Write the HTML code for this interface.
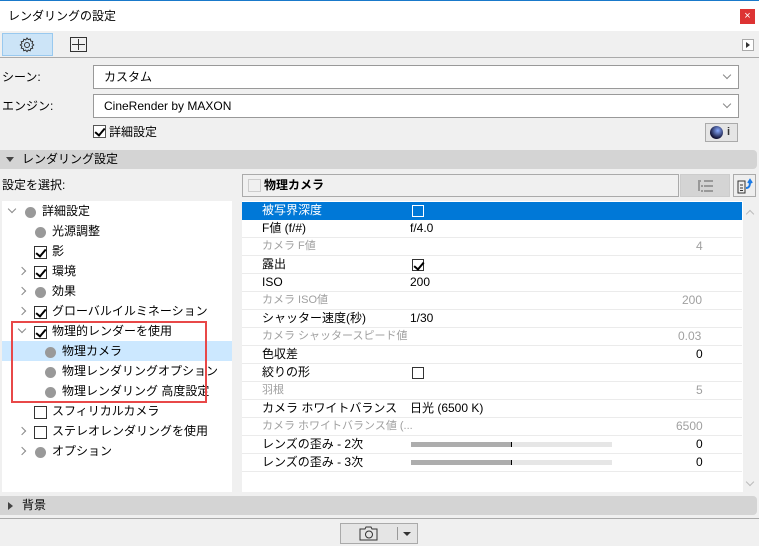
<!DOCTYPE html>
<html><head><meta charset="utf-8"><style>
*{box-sizing:border-box;margin:0;padding:0}
body{width:759px;height:546px;background:#f0f0f0;font-family:"Liberation Sans","Noto Sans CJK JP",sans-serif;font-size:12px;line-height:16px;color:#000;position:relative;overflow:hidden}
.a{position:absolute}
.cb{position:absolute;width:13px;height:13px;border:1px solid #333;background:#fff}
.cb.k::after{content:"";position:absolute;left:3px;top:0px;width:4px;height:8px;border:solid #000;border-width:0 2px 2px 0;transform:rotate(40deg)}
.dot{position:absolute;width:11px;height:11px;border-radius:50%;background:#999}
.chev{position:absolute;width:6px;height:6px;border:solid #888;border-width:0 1.5px 1.5px 0}
.row{position:absolute;left:0;width:500px;height:18px;border-bottom:1px solid #ebebeb}
.row span{position:absolute;top:0;line-height:17px;height:17px}
.g{color:#a0a0a0}
</style></head><body>
<div class="a" style="left:0;top:0;width:759px;height:1px;background:#1979ca"></div>
<div class="a" style="left:0;top:1px;width:759px;height:30px;background:#fff"></div>
<div class="a" style="left:8px;top:8px;font-size:12px">レンダリングの設定</div>
<div class="a" style="left:740px;top:9px;width:15px;height:15px;background:#d33;color:#fff;font-size:11px;text-align:center;line-height:14px">×</div>
<div class="a" style="left:2px;top:33px;width:51px;height:23px;background:#cce4f7;border:1px solid #99c9ef"></div>
<svg class="a" style="left:18px;top:36px" width="18" height="18" viewBox="0 0 18 18"><circle cx="9" cy="9" r="2.5" fill="none" stroke="#333"/><path d="M9 2l1.3 1.6 2-.6.4 2 2 .5-.6 2L15.7 9l-1.6 1.3.6 2-2 .4-.5 2-2-.6L9 15.7l-1.3-1.6-2 .6-.4-2-2-.5.6-2L2.3 9l1.6-1.3-.6-2 2-.4.5-2 2 .6z" fill="none" stroke="#333"/></svg>
<svg class="a" style="left:70px;top:37px" width="17" height="15"><rect x=".5" y=".5" width="16" height="14" fill="none" stroke="#333"/><path d="M8.5 2v11M2 7.5h13" stroke="#333"/></svg>
<div class="a" style="left:742px;top:39px;width:12px;height:12px;border:1px solid #aaa;background:#fff"></div>
<div class="a" style="left:746px;top:42px;border-left:4px solid #333;border-top:3px solid transparent;border-bottom:3px solid transparent"></div>
<div class="a" style="left:0;top:57px;width:759px;height:1px;background:#aaa"></div>
<div class="a" style="left:2px;top:69px">シーン:</div>
<div class="a" style="left:93px;top:65px;width:646px;height:24px;background:#fff;border:1px solid #999"><span class="a" style="left:10px;top:3px">カスタム</span></div>
<div class="a" style="left:2px;top:98px">エンジン:</div>
<div class="a" style="left:93px;top:94px;width:646px;height:24px;background:#fff;border:1px solid #999"><span class="a" style="left:10px;top:3px">CineRender by MAXON</span></div>
<div class="chev" style="left:724px;top:72px;transform:rotate(45deg)"></div>
<div class="chev" style="left:724px;top:101px;transform:rotate(45deg)"></div>
<div class="cb k" style="left:93px;top:125px;border-color:#555"></div>
<div class="a" style="left:109px;top:124px">詳細設定</div>
<div class="a" style="left:705px;top:123px;width:33px;height:19px;border:1px solid #aaa;background:#e5e5e5"></div>
<div class="a" style="left:710px;top:126px;width:13px;height:13px;border-radius:50%;background:radial-gradient(circle at 60% 35%,#8af,#113 70%)"></div>
<div class="a" style="left:727px;top:124px;font-size:11px;font-weight:bold;color:#333">i</div>
<div class="a" style="left:0;top:150px;width:757px;height:19px;background:#d4d4d4;border-radius:0 4px 4px 0"></div>
<div class="a" style="left:6px;top:157px;border-top:5px solid #444;border-left:4px solid transparent;border-right:4px solid transparent"></div>
<div class="a" style="left:22px;top:151px">レンダリング設定</div>
<div class="a" style="left:2px;top:177px">設定を選択:</div>
<div class="a" style="left:242px;top:174px;width:437px;height:23px;border:1px solid #aaa;background:#f0f0f0"></div>
<div class="cb" style="left:248px;top:179px;border-color:#ccc;background:#f0f0f0"></div>
<div class="a" style="left:264px;top:177px;font-weight:bold">物理カメラ</div>
<div class="a" style="left:680px;top:174px;width:50px;height:23px;background:#d4d4d4;border:1px solid #ccc"></div>
<svg class="a" style="left:696px;top:179px" width="18" height="14"><path d="M2 2h3M8 2h9M5 7h2M8 7h9M5 12h2M8 12h9M3 3v9" stroke="#999" stroke-width="2"/></svg>
<div class="a" style="left:733px;top:174px;width:23px;height:23px;border:1px solid #aaa;background:#eee"></div>
<svg class="a" style="left:736px;top:177px" width="18" height="18"><path d="M2 4h7v12H2z" fill="none" stroke="#333"/><path d="M4 8h3M4 11h3M4 13.5h3" stroke="#333"/><path d="M10 11c3 0 4-2 4-6M12 6l2-3 2 3" fill="none" stroke="#1a7ae6" stroke-width="2"/></svg>

<div class="a" style="left:2px;top:201px;width:230px;height:291px;background:#fff"></div>
<div class="a" style="left:2px;top:341px;width:230px;height:20px;background:#cce8ff"></div>
<div class="chev" style="left:9px;top:206px;transform:rotate(45deg)"></div><div class="dot" style="left:25px;top:207px"></div><div class="a" style="left:42px;top:203px">詳細設定</div>
<div class="dot" style="left:35px;top:227px"></div><div class="a" style="left:52px;top:223px">光源調整</div>
<div class="cb k" style="left:34px;top:246px"></div><div class="a" style="left:52px;top:243px">影</div>
<div class="chev" style="left:19px;top:268px;transform:rotate(-45deg)"></div><div class="cb k" style="left:34px;top:266px"></div><div class="a" style="left:52px;top:263px">環境</div>
<div class="chev" style="left:19px;top:288px;transform:rotate(-45deg)"></div><div class="dot" style="left:35px;top:287px"></div><div class="a" style="left:52px;top:283px">効果</div>
<div class="chev" style="left:19px;top:308px;transform:rotate(-45deg)"></div><div class="cb k" style="left:34px;top:306px"></div><div class="a" style="left:52px;top:303px">グローバルイルミネーション</div>
<div class="chev" style="left:19px;top:326px;transform:rotate(45deg)"></div><div class="cb k" style="left:34px;top:326px"></div><div class="a" style="left:52px;top:323px">物理的レンダーを使用</div>
<div class="dot" style="left:45px;top:347px"></div><div class="a" style="left:62px;top:343px">物理カメラ</div>
<div class="dot" style="left:45px;top:367px"></div><div class="a" style="left:62px;top:363px">物理レンダリングオプション</div>
<div class="dot" style="left:45px;top:387px"></div><div class="a" style="left:62px;top:383px">物理レンダリング 高度設定</div>
<div class="cb" style="left:34px;top:406px"></div><div class="a" style="left:52px;top:403px">スフィリカルカメラ</div>
<div class="chev" style="left:19px;top:428px;transform:rotate(-45deg)"></div><div class="cb" style="left:34px;top:426px"></div><div class="a" style="left:52px;top:423px">ステレオレンダリングを使用</div>
<div class="chev" style="left:19px;top:448px;transform:rotate(-45deg)"></div><div class="dot" style="left:35px;top:447px"></div><div class="a" style="left:52px;top:443px">オプション</div>
<div class="a" style="left:11px;top:321px;width:196px;height:82px;border:2px solid #e84848"></div>

<div class="a" style="left:242px;top:201px;width:515px;height:291px;background:#fff">
<div class="row" style="top:1px;background:#0078d7;color:#fff;border:0"><span style="left:20px">被写界深度</span><div class="a" style="left:170px;top:3px;width:12px;height:12px;border:1px solid #fff"></div></div>
<div class="row" style="top:19px"><span style="left:20px">F値 (f/#)</span><span style="left:168px">f/4.0</span></div>
<div class="row g" style="top:37px"><span style="left:20px;font-size:11px">カメラ F値</span><span style="left:454px">4</span></div>
<div class="row" style="top:55px"><span style="left:20px">露出</span><div class="cb k" style="left:170px;top:3px;width:12px;height:12px"></div></div>
<div class="row" style="top:73px"><span style="left:20px">ISO</span><span style="left:168px">200</span></div>
<div class="row g" style="top:91px"><span style="left:20px;font-size:11px">カメラ ISO値</span><span style="left:440px">200</span></div>
<div class="row" style="top:109px"><span style="left:20px">シャッター速度(秒)</span><span style="left:168px">1/30</span></div>
<div class="row g" style="top:127px"><span style="left:20px;font-size:11px">カメラ シャッタースピード値</span><span style="left:436px">0.03</span></div>
<div class="row" style="top:145px"><span style="left:20px">色収差</span><span style="left:454px">0</span></div>
<div class="row" style="top:163px"><span style="left:20px">絞りの形</span><div class="cb" style="left:170px;top:3px;width:12px;height:12px"></div></div>
<div class="row g" style="top:181px"><span style="left:20px;font-size:11px">羽根</span><span style="left:454px">5</span></div>
<div class="row" style="top:199px"><span style="left:20px">カメラ ホワイトバランス</span><span style="left:168px">日光 (6500 K)</span></div>
<div class="row g" style="top:217px"><span style="left:20px;font-size:11px">カメラ ホワイトバランス値 (...</span><span style="left:434px">6500</span></div>
<div class="row" style="top:235px"><span style="left:20px">レンズの歪み - 2次</span><div class="a" style="left:169px;top:6px;width:201px;height:5px;background:#e6e6e6"><div style="width:101px;height:5px;background:#adadad;border-right:1px solid #000"></div></div><span style="left:454px">0</span></div>
<div class="row" style="top:253px"><span style="left:20px">レンズの歪み - 3次</span><div class="a" style="left:169px;top:6px;width:201px;height:5px;background:#e6e6e6"><div style="width:101px;height:5px;background:#adadad;border-right:1px solid #000"></div></div><span style="left:454px">0</span></div>
<div class="a" style="left:501px;top:0;width:14px;height:291px;background:#f0f0f0"></div>
<div class="chev" style="left:505px;top:10px;transform:rotate(-135deg);border-color:#bbb"></div>
<div class="chev" style="left:505px;top:278px;transform:rotate(45deg);border-color:#bbb"></div>
</div>

<div class="a" style="left:0;top:496px;width:757px;height:19px;background:#d4d4d4;border-radius:0 4px 4px 0"></div>
<div class="a" style="left:8px;top:502px;border-left:5px solid #444;border-top:4px solid transparent;border-bottom:4px solid transparent"></div>
<div class="a" style="left:22px;top:497px">背景</div>
<div class="a" style="left:0;top:518px;width:759px;height:1px;background:#aaa"></div>
<div class="a" style="left:340px;top:523px;width:78px;height:21px;border:1px solid #aaa;background:#e5e5e5"></div>
<svg class="a" style="left:359px;top:526px" width="20" height="15"><path d="M1 3h5l1-2h5l1 2h5v11H1z" fill="none" stroke="#333"/><circle cx="10" cy="8.5" r="3.5" fill="none" stroke="#333"/></svg>
<div class="a" style="left:397px;top:527px;width:1px;height:13px;background:#999"></div>
<div class="a" style="left:403px;top:532px;border-top:4px solid #333;border-left:4px solid transparent;border-right:4px solid transparent"></div>
</body></html>
